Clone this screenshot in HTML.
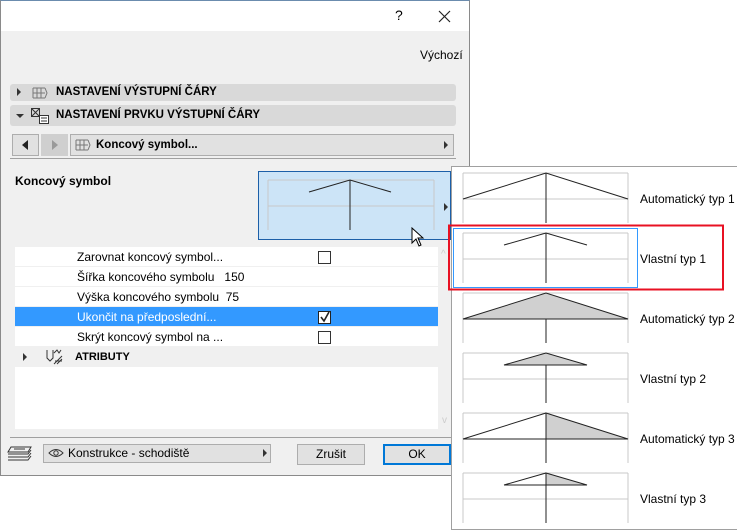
<!DOCTYPE html>
<html><head><meta charset="utf-8"><style>
*{margin:0;padding:0;box-sizing:border-box}
body{width:737px;height:530px;position:relative;background:#fff;font-family:"Liberation Sans",sans-serif;font-size:12px;color:#000;overflow:hidden}
.a{position:absolute}
.dlg{left:0;top:0;width:470px;height:476px;background:#f0f0f0;border:1px solid #8a8a8a;border-top:1px solid #6b8cae}
.sec{background:#d9d9d9;border-radius:3px;font-weight:bold;font-size:11.5px;line-height:16px}
.row{left:14px;width:423px;height:20px;line-height:20px;padding-left:62px;background:#fff;border-bottom:1px solid #f0f0f0}
.cb{width:13px;height:13px;border:1px solid #333;background:#fff;left:303px;top:4px}
.btn{background:#e1e1e1;border:1px solid #adadad;text-align:center;line-height:19px}
</style></head><body>
<div class="a dlg">
 <div class="a" style="left:0;top:0;width:468px;height:30px;background:#fff"></div>
 <div class="a" style="left:394px;top:6px;font-size:14px">?</div>
 <svg class="a" style="left:437px;top:9px" width="13" height="13"><path d="M1 1L12 12M12 1L1 12" stroke="#222" stroke-width="1.2"/></svg>
 <div class="a" style="left:419px;top:47px">Výchozí</div>
 <div class="a sec" style="left:9px;top:83px;width:446px;height:17px"></div>
 <div class="a" style="left:16px;top:87px;width:0;height:0;border-left:4px solid #333;border-top:4px solid transparent;border-bottom:4px solid transparent"></div>
 <svg class="a" style="left:31px;top:85px" width="16" height="13"><path d="M1 2H13M1 7H13M1 12H13M1 2V12M5 2V12M9 2V12M13 2L15 7L13 12" stroke="#777" fill="none"/></svg>
 <div class="a" style="left:55px;top:85px;font-weight:bold;font-size:11.5px">NASTAVENÍ VÝSTUPNÍ ČÁRY</div>
 <div class="a sec" style="left:9px;top:104px;width:446px;height:21px"></div>
 <div class="a" style="left:15px;top:113px;width:0;height:0;border-top:4px solid #333;border-left:4px solid transparent;border-right:4px solid transparent"></div>
 <svg class="a" style="left:29px;top:106px" width="20" height="17"><rect x="1.5" y="1.5" width="8" height="8" fill="none" stroke="#333"/><path d="M2 2L9 9M9 2L2 9" stroke="#333"/><rect x="9.5" y="8.5" width="9" height="8" fill="#fff" stroke="#333"/><path d="M11 11H17M11 14H17" stroke="#333"/></svg>
 <div class="a" style="left:55px;top:108px;font-weight:bold;font-size:11.5px">NASTAVENÍ PRVKU VÝSTUPNÍ ČÁRY</div>
 <div class="a btn" style="left:11px;top:133px;width:27px;height:22px"></div>
 <div class="a" style="left:21px;top:139px;border-right:6px solid #222;border-top:5px solid transparent;border-bottom:5px solid transparent"></div>
 <div class="a btn" style="left:40px;top:133px;width:27px;height:22px;background:#cfcfcf;border-color:#cfcfcf"></div>
 <div class="a" style="left:51px;top:139px;border-left:6px solid #999;border-top:5px solid transparent;border-bottom:5px solid transparent"></div>
 <div class="a btn" style="left:69px;top:133px;width:384px;height:22px"></div>
 <svg class="a" style="left:74px;top:137px" width="16" height="13"><path d="M1 2H13M1 7H13M1 12H13M1 2V12M5 2V12M9 2V12M13 2L15 7L13 12" stroke="#777" fill="none"/></svg>
 <div class="a" style="left:95px;top:138px;font-weight:bold;font-size:11.5px">Koncový symbol...</div>
 <div class="a" style="left:443px;top:140px;border-left:4px solid #333;border-top:4px solid transparent;border-bottom:4px solid transparent"></div>
 <div class="a" style="left:9px;top:157px;width:446px;height:1px;background:#a0a0a0"></div>
 <div class="a" style="left:14px;top:173px;font-weight:bold">Koncový symbol</div>
 <div class="a" style="left:257px;top:170px;width:193px;height:69px;background:#cce4f7;border:1px solid #1c5fa8"></div>
 <svg class="a" style="left:257px;top:170px" width="193" height="69"><path d="M10 9H176M10 35H176M10 9V59M176 9V59" stroke="#c8c8c8" fill="none"/><path d="M92 9V59M51 21L92 9L133 21" stroke="#222" fill="none"/><path d="M186 32V40L190 36Z" fill="#333"/></svg>
 <svg class="a" style="left:410px;top:226px" width="14" height="20"><path d="M1 1V16L5 12L8 19L10 18L7 11H12Z" fill="#fff" stroke="#000"/></svg>
 <div class="a" style="left:14px;top:246px;width:423px;height:182px;background:#fff"></div>
 <div class="a row" style="top:246px">Zarovnat koncový symbol...<div class="a cb"></div></div>
 <div class="a row" style="top:266px">Šířka koncového symbolu &nbsp; 150</div>
 <div class="a row" style="top:286px">Výška koncového symbolu &nbsp;75</div>
 <div class="a row" style="top:306px;background:#3399ff;color:#fff">Ukončit na předposlední...<div class="a cb" style="border-color:#222"><svg width="11" height="11" style="position:absolute;left:0;top:0"><path d="M2 5L5 9L10 0" stroke="#222" stroke-width="1.6" fill="none"/></svg></div></div>
 <div class="a row" style="top:326px">Skrýt koncový symbol na ...<div class="a cb"></div></div>
 <div class="a" style="left:14px;top:346px;width:423px;height:20px;background:#f0f0f0"></div>
 <div class="a" style="left:22px;top:352px;border-left:4px solid #333;border-top:4px solid transparent;border-bottom:4px solid transparent"></div>
 <svg class="a" style="left:44px;top:347px" width="20" height="18"><path d="M2 2V10L5 13L8 10V2M9 5L12 2L14 5L16 2M9 16L17 8M12 16L17 11M10 13L17 13" stroke="#333" fill="none"/></svg>
 <div class="a" style="left:74px;top:350px;font-weight:bold;font-size:11px">ATRIBUTY</div>
 <div class="a" style="left:440px;top:248px;color:#ccc;font-size:10px">^</div>
 <div class="a" style="left:441px;top:414px;color:#ccc;font-size:10px">v</div>
 <div class="a" style="left:9px;top:436px;width:446px;height:1px;background:#a0a0a0"></div>
 <svg class="a" style="left:6px;top:443px" width="26" height="18"><path d="M4 3H24L21 8H1ZM1 10H21L24 6M1 13H21L24 9M1 16H21L24 12" stroke="#333" fill="none"/><path d="M7 5H18" stroke="#333"/></svg>
 <div class="a btn" style="left:42px;top:443px;width:228px;height:19px;line-height:17px;padding-left:24px;text-align:left">Konstrukce - schodiště</div>
 <svg class="a" style="left:47px;top:447px" width="16" height="10"><path d="M1 5Q8 -2 15 5Q8 12 1 5Z" fill="none" stroke="#333"/><circle cx="8" cy="5" r="2.2" fill="none" stroke="#333"/></svg>
 <div class="a" style="left:262px;top:448px;border-left:4px solid #333;border-top:4px solid transparent;border-bottom:4px solid transparent"></div>
 <div class="a btn" style="left:296px;top:443px;width:68px;height:21px">Zrušit</div>
 <div class="a btn" style="left:382px;top:443px;width:68px;height:21px;border:2px solid #0078d7;line-height:17px">OK</div>
</div>
<div class="a" style="left:451px;top:166px;width:286px;height:364px;background:#fff;border:1px solid #a0a0a0;border-right:none"></div>
<svg class="a" style="left:0;top:0" width="737" height="530">
 <g fill="none" stroke="#c8c8c8">
  <path d="M463 173H628M463 199H628M463 173V223M628 173V223"/>
  <path d="M463 233H628M463 259H628M463 233V283M628 233V283"/>
  <path d="M463 293H628M463 319H628M463 293V343M628 293V343"/>
  <path d="M463 353H628M463 379H628M463 353V403M628 353V403"/>
  <path d="M463 413H628M463 439H628M463 413V463M628 413V463"/>
  <path d="M463 473H628M463 499H628M463 473V523M628 473V523"/>
 </g>
 <g stroke="#222" fill="none">
  <path d="M546 173V223M463 199L546 173L628 199"/>
  <path d="M546 233V283M504 245L546 233L587 245"/>
  <path d="M463 319L546 293L628 319Z" fill="#d0d0d0"/><path d="M546 319V343"/>
  <path d="M504 365L546 353L587 365Z" fill="#d0d0d0"/><path d="M546 365V403"/>
  <path d="M546 413L628 439H546Z" fill="#d0d0d0"/><path d="M463 439L546 413M463 439H628M546 413V463"/>
  <path d="M546 473L587 485H546Z" fill="#d0d0d0"/><path d="M504 485L546 473M504 485H587M546 473V523"/>
 </g>
 <rect x="453.5" y="228.5" width="184" height="59" fill="none" stroke="#3399ff"/>
 <rect x="449" y="225.5" width="274" height="64" fill="none" stroke="#e81123" stroke-width="2"/>
 <g font-family="Liberation Sans, sans-serif" font-size="12" fill="#000">
  <text x="640" y="203">Automatický typ 1</text>
  <text x="640" y="263">Vlastní typ 1</text>
  <text x="640" y="323">Automatický typ 2</text>
  <text x="640" y="383">Vlastní typ 2</text>
  <text x="640" y="443">Automatický typ 3</text>
  <text x="640" y="503">Vlastní typ 3</text>
 </g>
</svg>
</body></html>
